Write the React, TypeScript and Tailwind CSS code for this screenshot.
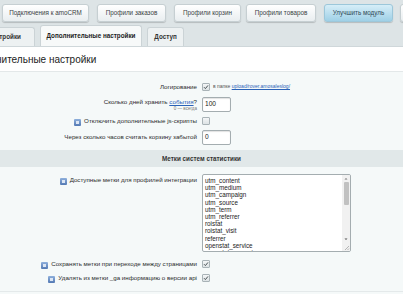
import React from "react";

const font = { fontFamily: '"Liberation Sans", Arial, sans-serif' };

const TopButton = ({ label, w, blue }: { label: string; w: string; blue?: boolean }) => (
  <div
    className={`flex h-[18px] shrink-0 items-center justify-center rounded-[3px] border text-[6.3px] whitespace-nowrap shadow-[0_1px_1px_rgba(0,0,0,0.18)] ${w} ${
      blue
        ? "border-[#9cc7da] bg-gradient-to-b from-[#d6eef8] to-[#9fd0e6] text-[#2e4a57]"
        : "border-[#c6cfd2] bg-gradient-to-b from-[#ffffff] to-[#e9eef0] text-[#3a4244]"
    }`}
  >
    {label}
  </div>
);

const Check = ({ checked }: { checked?: boolean }) => (
  <div className="flex h-[8px] w-[8px] items-center justify-center rounded-[1px] border border-[#a9b3b7] bg-gradient-to-b from-[#f4f6f7] to-[#dde3e5]">
    {checked && (
      <svg width="6" height="6" viewBox="0 0 6 6">
        <path d="M1 3.2 L2.4 4.6 L5 1.4" fill="none" stroke="#4a5356" strokeWidth="1" />
      </svg>
    )}
  </div>
);

const Info = () => (
  <span className="mr-[3px] inline-flex h-[7px] w-[7px] items-center justify-center rounded-[1px] bg-gradient-to-b from-[#8fb0dc] to-[#5379b3] align-[-1px]">
    <span className="h-[3px] w-[3px] bg-[#dce6f4]" />
  </span>
);

const Row = ({
  label,
  h,
  children,
}: {
  label: React.ReactNode;
  h: string;
  children: React.ReactNode;
}) => (
  <div className={`flex items-center ${h}`}>
    <div className="w-[197px] shrink-0 text-right text-[6.2px] text-[#2c2c2c] whitespace-nowrap">
      {label}
    </div>
    <div className="ml-[5px] flex items-center">{children}</div>
  </div>
);

const Input = ({ value }: { value: string }) => (
  <div className="flex h-[15px] w-[29px] items-center rounded-[2px] border border-[#a4adb0] bg-white px-[2px] text-[6.6px] text-[#222] shadow-[inset_0_1px_1px_rgba(0,0,0,0.12)]">
    {value}
  </div>
);

const metks = [
  "utm_content",
  "utm_medium",
  "utm_campaign",
  "utm_source",
  "utm_term",
  "utm_referrer",
  "roistat",
  "roistat_visit",
  "referrer",
  "openstat_service",
  "openstat_campaign",
];

export default function App() {
  return (
    <div className="h-[294px] w-[403px] overflow-hidden bg-[#f5f9f9]" style={font}>
      <div className="flex h-[25px] items-center bg-[#dde4e6] pl-[2px]">
        <TopButton label="Подключения к amoCRM" w="w-[87px]" />
        <div className="w-[8px] shrink-0" />
        <TopButton label="Профили заказов" w="w-[69px]" />
        <div className="w-[8px] shrink-0" />
        <TopButton label="Профили корзин" w="w-[67px]" />
        <div className="w-[5px] shrink-0" />
        <TopButton label="Профили товаров" w="w-[70px]" />
        <div className="w-[8px] shrink-0" />
        <TopButton label="Улучшить модуль" w="w-[69px]" blue />
        <div className="w-[7px] shrink-0" />
        <TopButton label="Справка" w="w-[50px]" />
      </div>

      <div className="flex h-[22px] items-end gap-[5px] border-b border-[#cfd7da] bg-[#dde4e6]">
        <div className="-ml-[60px] flex h-[19px] w-[95px] items-center justify-center rounded-t-[3px] border border-b-0 border-[#cbd3d6] bg-[#edf1f2] text-[6.3px] font-bold text-[#333] whitespace-nowrap">
          Основные настройки
        </div>
        <div className="flex h-[21px] w-[102px] items-center justify-center rounded-t-[3px] border border-b-0 border-[#cbd3d6] bg-[#f7f9f9] text-[6.3px] font-bold text-[#222] whitespace-nowrap">
          Дополнительные настройки
        </div>
        <div className="flex h-[19px] w-[37px] items-center justify-center rounded-t-[3px] border border-b-0 border-[#cbd3d6] bg-[#edf1f2] text-[6.3px] font-bold text-[#333]">
          Доступ
        </div>
      </div>

      <div className="flex h-[25px] items-center border-b border-[#e3e8e9] bg-white">
        <div className="-ml-[33px] text-[10px] whitespace-nowrap text-[#222]">
          Дополнительные настройки
        </div>
      </div>

      <div className="pt-[7px]">
        <Row label="Логирование" h="h-[16px]">
          <Check checked />
          <span className="ml-[3px] text-[5px] text-[#555]">
            в папке{" "}
            <span className="text-[#2a62b8] underline">upload/rover.amosaleslog/</span>
          </span>
        </Row>
        <Row
          h="h-[18px]"
          label={
            <div className="flex flex-col items-end pt-[1px] leading-[8px]">
              <span>
                Сколько дней хранить <span className="text-[#2a62b8] underline">события</span>?
              </span>
              <span className="text-[4.5px] leading-[5px] text-[#777]">0 — всегда</span>
            </div>
          }
        >
          <Input value="100" />
        </Row>
        <Row
          h="h-[16px]"
          label={
            <>
              <Info />
              Отключить дополнительные js-скрипты
            </>
          }
        >
          <Check />
        </Row>
        <Row h="h-[16px]" label="Через сколько часов считать корзину забытой">
          <Input value="0" />
        </Row>
      </div>

      <div className="mt-[5px] flex h-[17px] items-center justify-center bg-[#e1e8e9] text-[6.3px] font-bold text-[#333]">
        Метки систем статистики
      </div>

      <div className="mt-[7px] flex items-start">
        <div className="w-[197px] shrink-0 pt-[1px] text-right text-[6.2px] text-[#2c2c2c] whitespace-nowrap">
          <Info />
          Доступные метки для профилей интеграции
        </div>
        <div className="relative ml-[5px] h-[78px] w-[149px] overflow-hidden rounded-[2px] border border-[#a4adb0] bg-white">
          <div className="pt-[2px] pl-[2px] text-[6.3px] leading-[7.2px] text-[#222]">
            {metks.map((m) => (
              <div key={m}>{m}</div>
            ))}
          </div>
          <div className="absolute top-0 right-0 flex h-full w-[8px] flex-col items-center bg-[#f1f1f1]">
            <svg width="8" height="7" viewBox="0 0 8 7">
              <path d="M2.5 4.5 L4 3 L5.5 4.5 Z" fill="#777" />
            </svg>
            <div className="h-[23px] w-[5px] rounded-[1px] bg-[#c1c1c1]" />
            <div className="flex-1" />
            <svg width="8" height="7" viewBox="0 0 8 7">
              <path d="M2.5 2.5 L4 4 L5.5 2.5 Z" fill="#555" />
            </svg>
            <svg width="8" height="8" viewBox="0 0 8 8">
              <path d="M7 3 L3 7 M7 5.5 L5.5 7" stroke="#999" strokeWidth="0.7" />
            </svg>
          </div>
        </div>
      </div>

      <div className="mt-[5px]">
        <Row
          h="h-[14px]"
          label={
            <>
              <Info />
              Сохранять метки при переходе между страницами
            </>
          }
        >
          <Check checked />
        </Row>
        <Row
          h="h-[13px]"
          label={
            <>
              <Info />
              Удалять из метки _ga информацию о версии api
            </>
          }
        >
          <Check checked />
        </Row>
      </div>
      <div className="mt-[7px] border-t border-[#e4e9ea]" />
    </div>
  );
}
